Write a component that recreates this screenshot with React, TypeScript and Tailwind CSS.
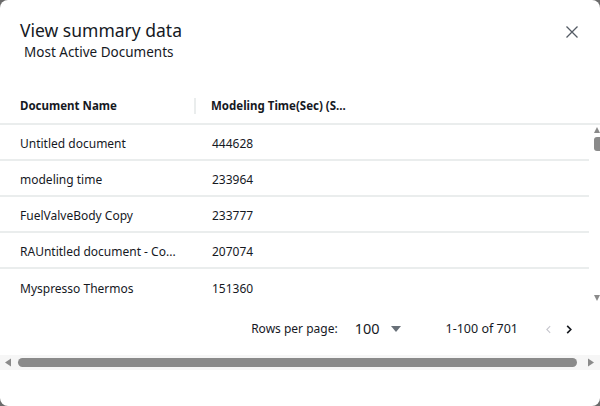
import React from 'react';

const rows = [
  { name: 'Untitled document', time: '444628' },
  { name: 'modeling time', time: '233964' },
  { name: 'FuelValveBody Copy', time: '233777' },
  { name: 'RAUntitled document - Co...', time: '207074' },
  { name: 'Myspresso Thermos', time: '151360' },
];

const font = { fontFamily: '"Noto Sans", "Open Sans", Arial, sans-serif' };

export default function App() {
  return (
    <div className="w-[600px] h-[406px] bg-[#6b6b6b]" style={font}>
      <div className="w-full h-full bg-white rounded-[8px] flex flex-col overflow-hidden text-[#16191f]">
        {/* Title */}
        <div className="flex items-start justify-between pl-5 pr-[21px] pt-[17px]">
          <div>
            <h2 className="text-[17.5px] leading-[26px]">View summary data</h2>
            <p className="text-[13.5px] leading-[18px] pl-1">Most Active Documents</p>
          </div>
          <button type="button" className="mt-[8px] w-[14px] h-[14px] text-[#545b64]">
            <svg viewBox="0 0 14 14" className="w-[14px] h-[14px]" fill="none" stroke="currentColor" strokeWidth="1.3">
              <path d="M1.5 1.5l11 11M12.5 1.5l-11 11" />
            </svg>
          </button>
        </div>

        {/* Table header */}
        <div className="mt-[27px] h-[37px] flex items-center text-[11.5px] font-bold border-b-2 border-[#eaeded]">
          <div className="w-[196px] pl-5 flex items-center justify-between">
            <span>Document Name</span>
            <span className="w-[2px] h-[16px] bg-[#eaeded]" />
          </div>
          <div className="pl-[15px]">Modeling Time(Sec) (S...</div>
        </div>

        {/* Body with vertical scrollbar */}
        <div className="flex h-[182px]">
          <div className="w-[589px]">
            {rows.map((r, i) => (
              <div
                key={r.name}
                className={`h-[36px] flex items-center pt-[3px] text-[12px] ${i < rows.length - 1 ? 'border-b-2 border-[#eaeded]' : ''}`}
              >
                <div className="w-[196px] pl-5 truncate">{r.name}</div>
                <div className="pl-[16px]">{r.time}</div>
              </div>
            ))}
          </div>
          <div className="flex-1 flex flex-col items-end pt-[2px] pb-[6px] justify-between">
            <div className="flex flex-col items-end gap-[4px]">
              <svg viewBox="0 0 6 6" className="w-[6px] h-[6px]">
                <path d="M3 0L6 6H0z" fill="#8a8a8a" />
              </svg>
              <div className="w-[6px] h-[14px] bg-[#8a8a8a] rounded-l-[3px]" />
            </div>
            <svg viewBox="0 0 6 6" className="w-[6px] h-[6px]">
              <path d="M0 0H6L3 6z" fill="#8a8a8a" />
            </svg>
          </div>
        </div>

        {/* Pagination */}
        <div className="h-[44px] flex items-center justify-end pr-[28px] text-[12px]">
          <span>Rows per page:</span>
          <span className="ml-[17px] text-[14.5px]">100</span>
          <svg viewBox="0 0 10 6" className="ml-[11px] w-[10px] h-[6px]">
            <path d="M0 0H10L5 6z" fill="#687078" />
          </svg>
          <span className="ml-[45px] text-[12.5px]">1-100 of 701</span>
          <svg viewBox="0 0 6 10" className="ml-[28px] w-[5px] h-[9px]" fill="none" stroke="#c6c6cd" strokeWidth="1.3">
            <path d="M5 1L1 5l4 4" />
          </svg>
          <svg viewBox="0 0 6 10" className="ml-[15px] w-[6px] h-[9px]" fill="none" stroke="#16191f" strokeWidth="1.8">
            <path d="M1 1l4 4-4 4" />
          </svg>
        </div>

        {/* Horizontal scrollbar */}
        <div className="mt-[4px] h-[15px] w-[600px] bg-[#f6f6f6] flex items-center pl-[5px] pr-[6px]">
          <svg viewBox="0 0 6 8" className="w-[6px] h-[9px]">
            <path d="M6 0V8L0 4z" fill="#8a8a8a" />
          </svg>
          <div className="ml-[7px] h-[9px] flex-1 bg-[#8a8a8a] rounded-full" />
          <svg viewBox="0 0 6 8" className="ml-[11px] w-[6px] h-[9px]">
            <path d="M0 0V8L6 4z" fill="#8a8a8a" />
          </svg>
        </div>
      </div>
    </div>
  );
}
